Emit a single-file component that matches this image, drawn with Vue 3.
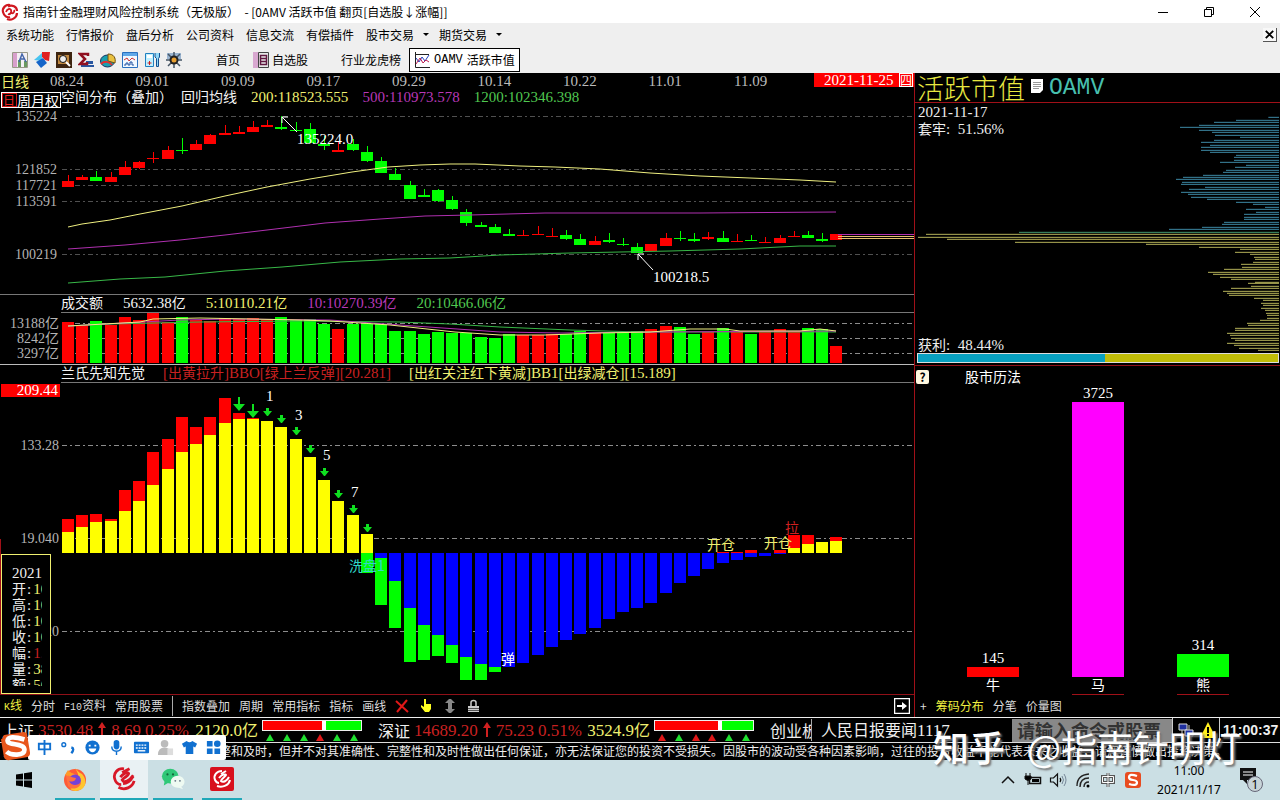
<script setup>
import { h } from 'vue'

// Splits a label into CJK and latin runs so each gets its own size.
const Mix = (props) =>
  props.s
    .split(/([\x20-\x7e]+)/)
    .filter(Boolean)
    .map((p) => h(props.tag || 'span', { class: /^[\x20-\x7e]+$/.test(p) ? 'lat' : 'cjk' }, p))
Mix.props = ['s', 'tag']

const menus = ['系统功能', '行情报价', '盘后分析', '公司资料', '信息交流', '有偿插件']
const dates = ['08.24', '09.01', '09.09', '09.17', '09.29', '10.14', '10.22', '11.01', '11.09']

const cx = (i) => Math.round(68 + 14.23 * i)
const bx = (i) => cx(i) - 6

// colour, high, low, body top, body bottom
const candles = [
  ['r', 175, 187, 181, 187], ['r', 175, 180, 177, 180], ['g', 171, 181, 177, 181], ['r', 172, 182, 177, 182],
  ['r', 161, 175, 167, 175], ['r', 161, 169, 162, 168], ['r', 152, 163, 158, 159], ['r', 146, 159, 150, 159],
  ['g', 138, 154, 150, 151], ['r', 140, 150, 144, 150], ['r', 134, 144, 135, 144], ['r', 125, 135, 133, 135],
  ['r', 126, 134, 132, 134], ['r', 121, 132, 127, 132], ['r', 120, 127, 125, 127], ['g', 116, 130, 127, 129],
  ['g', 122, 132, 130, 131], ['g', 123, 143, 129, 143], ['g', 136, 150, 144, 146], ['r', 141, 152, 150, 152],
  ['g', 139, 151, 144, 150], ['g', 146, 162, 152, 161], ['g', 157, 173, 161, 173], ['g', 168, 180, 174, 180],
  ['g', 181, 199, 185, 199], ['g', 189, 197, 195, 197], ['g', 189, 202, 190, 201], ['g', 196, 210, 200, 209],
  ['g', 209, 226, 212, 223], ['g', 222, 227, 225, 227], ['g', 224, 233, 227, 233], ['g', 229, 236, 234, 236],
  ['r', 230, 236, 235, 236], ['r', 226, 235, 234, 235], ['r', 228, 237, 236, 237], ['g', 230, 240, 235, 239],
  ['g', 234, 245, 239, 245], ['r', 236, 245, 241, 245], ['g', 233, 243, 240, 242], ['g', 238, 246, 244, 245],
  ['g', 243, 253, 247, 253], ['r', 244, 251, 244, 251], ['r', 233, 246, 238, 246], ['g', 231, 241, 238, 239],
  ['g', 233, 242, 239, 241], ['r', 232, 240, 237, 239], ['g', 231, 242, 238, 242], ['r', 234, 242, 241, 242],
  ['g', 235, 241, 240, 241], ['r', 237, 243, 242, 243], ['r', 235, 243, 238, 243], ['r', 231, 237, 236, 237],
  ['g', 231, 238, 235, 238], ['g', 233, 242, 239, 241], ['r', 234, 240, 234, 240]
]

const volumeColors = 'rrgrrrrrgrrrrrrggggr' + 'g'.repeat(12) + 'rrrggrgggrrggrgrgrrrggr'
const volumeTops = [
  322, 325, 321, 325, 317, 320, 313, 322, 317, 320, 321, 318, 319, 318, 320, 317, 320, 319, 324, 329,
  324, 324, 324, 331, 331, 334, 332, 333, 333, 337, 338, 334, 335, 335, 334, 334, 331, 333, 333, 333,
  331, 329, 326, 327, 334, 332, 328, 332, 334, 331, 329, 331, 328, 329, 346
]

const base = 553
// bar index, top, bottom, colour
const osc = []
const ups = [
  [519, 532], [515, 527], [514, 522], [519, 521], [490, 511], [481, 501], [452, 485], [439, 469], [417, 452],
  [427, 444], [417, 435], [398, 423], [413, 419], [418, 419], [421, 421], [427, 427], [439, 439], [457, 457],
  [480, 480], [501, 501], [515, 515], [534, 534]
]
ups.forEach(([r, y], i) => {
  osc.push([i, r, y, 'r'], [i, y, base, 'y'])
})
osc.push([21, base, 573, 'g'])
const downs = [
  [558, 605], [581, 628], [608, 662], [625, 660], [635, 656], [645, 663], [657, 680], [664, 680], [667, 672],
  [667], [663], [655], [647], [640], [634], [628], [619], [612], [608], [603], [593], [583], [576], [569],
  [563], [560], [557], [556], [554]
]
downs.forEach(([b, g], k) => {
  osc.push([22 + k, base, b, 'b'])
  if (g) osc.push([22 + k, b, g, 'g'])
})
osc.push([46, 552, 553, 'r'], [47, 552, 553, 'r'], [48, 550, 553, 'r'], [50, 550, 553, 'r'])
osc.push([51, 535, 548, 'r'], [51, 548, base, 'y'], [52, 535, 544, 'r'], [52, 544, base, 'y'])
osc.push([53, 542, base, 'y'], [54, 537, 541, 'r'], [54, 541, base, 'y'])

const arrows = [[14, 408], [15, 415], [16, 427], [17, 445], [18, 468], [19, 490], [20, 505], [21, 524]]
const arrowPath = (i, y) => {
  const c = cx(i)
  return `M${c - 1} ${y}h3v3h3l-4 5h-1l-4-5h3z`
}
const longArrow = (i, y) => {
  const c = cx(i)
  return `M${c - 1} ${y}h2v7h5l-6 7-6-7h5z`
}
const marks = [['1', 266, 401], ['3', 295, 420], ['5', 323, 460], ['7', 351, 497]]

// y, start x; drawn on a 1/3 px grid up to the right edge
const chipsBlue = [
  [142, 1075], [151, 978], [157, 912], [166, 867], [172, 810], [181, 867], [187, 906], [196, 915], [202, 990],
  [211, 912], [217, 873], [226, 900], [232, 873], [241, 873], [247, 900], [256, 978], [262, 972], [271, 972],
  [277, 930], [286, 1008], [292, 975], [301, 948], [307, 939], [316, 879], [322, 819], [328, 798], [337, 816],
  [343, 813], [352, 885], [358, 837], [367, 813], [373, 834], [382, 843], [388, 891], [397, 978], [403, 1029],
  [412, 1065], [418, 1008], [427, 1038], [433, 1002], [442, 1002], [448, 1002], [457, 942], [463, 936],
  [472, 876], [478, 777]
]
const chipsGold = [
  [493, 48], [502, 24], [508, 111], [517, 315], [523, 708], [532, 867], [538, 990], [547, 975], [553, 1020],
  [562, 1032], [568, 1035], [577, 1029], [583, 993], [592, 996], [598, 942], [607, 894], [613, 909], [622, 930],
  [628, 963], [637, 1035], [640, 1014], [649, 1023], [655, 963], [664, 939], [670, 951], [676, 957],
  [685, 1032], [691, 1059], [700, 1053], [706, 1059], [715, 1053], [721, 1065], [730, 1068], [736, 1071],
  [745, 1071], [751, 1050], [760, 1011], [766, 1014], [775, 975], [781, 975], [790, 951], [796, 960],
  [805, 963], [811, 975], [820, 951], [826, 972], [835, 987], [841, 1044]
]
const chipPath = (list) => list.map(([y, x]) => `M${x} ${y}H1107`).join('')

const calendar = [
  { n: '145', name: '牛', x: 967, top: 667, c: '#f00' },
  { n: '3725', name: '马', x: 1072, top: 402, c: '#f0f' },
  { n: '314', name: '熊', x: 1177, top: 654, c: '#0f0' }
]

const quote = [
  ['开', '103', 'y'], ['高', '104', 'y'], ['低', '102', 'y'], ['收', '103', 'y'],
  ['幅', '1.2', 'r'], ['量', '385', 'y'], ['额', '563', 'y']
]

const indices = [
  { name: '上证', price: '3530.48', chg: '8.69', pct: '0.25%', amt: '2120.0亿', red: 60, t: 'gggrgg' },
  { name: '深证', price: '14689.20', chg: '75.23', pct: '0.51%', amt: '3524.9亿', red: 64, t: 'rgrrgg' }
]

const notice =
  '员会指定信息披露媒体，力求真实准确完整和及时，但并不对其准确性、完整性和及时性做出任何保证，亦无法保证您的投资不受损失。因股市的波动受各种因素影响，过往的投资收益不能代表未来之收益，请您谨慎做出投资决策。'
</script>

<template>
  <div class="app">
    <header class="title">
      <svg class="logo" viewBox="0 0 18 18"><g fill="none" stroke="#d01820" stroke-width="2.2"><path d="M9 2C5 1 1 5 2 9s4 6 7 5" /><path d="M7 3.500C11 1 16 4 16 8" /><path d="M16 10c0 5-6 8-10 6" /><path d="M5 9c1-3 4-4 5-2s-1 5-3 4M10 10c2 1 4-1 3-3" stroke-width="1.800" /></g></svg>
      <h1>指南针金融理财风险控制系统（无极版）&nbsp; - [0AMV 活跃市值 翻页[自选股↓涨幅]]</h1>
      <div class="win">
        <button aria-label="最小化"><svg viewBox="0 0 12 12"><path d="M1 6.500h10" stroke="#000" /></svg></button>
        <button aria-label="还原"><svg viewBox="0 0 12 12"><path d="M1.500 3.500h7v7h-7zM3.500 3V1.500h7v7H9" fill="none" stroke="#000" /></svg></button>
        <button aria-label="关闭"><svg viewBox="0 0 12 12"><path d="M1 1l10 10M11 1L1 11" stroke="#000" /></svg></button>
      </div>
    </header>
    <nav class="menu">
      <button v-for="m in menus" :key="m">{{ m }}</button>
      <button class="drop">股市交易<i></i></button>
      <button class="drop">期货交易<i></i></button>
      <button class="mdi" aria-label="关闭子窗口"><svg viewBox="0 0 14 14"><path d="M3 3l8 8M11 3l-8 8" stroke="#000" stroke-width="2" /></svg></button>
    </nav>
    <div class="tools">
      <div class="icons">
        <button aria-label="走势"><svg viewBox="0 0 16 16"><path d="M.5.500h15v15H.5z" fill="#f4f0f4" stroke="#998" /><path d="M1 1h4v14H1z" fill="#d8a0cc" /><path d="M6 15V8h3v7zM12 15V9h3v6z" fill="#6a9a60" /><path d="M7 10l3-8 4 8M8 7h5" fill="none" stroke="#4466aa" stroke-width="1.500" /></svg></button>
        <button aria-label="标记"><svg viewBox="0 0 16 16"><path d="M0 8l8-7v8z" fill="#49c4f0" /><path d="M8 0h8l-1 9-4-1-3-3z" fill="#e02020" /><path d="M2 10l7-4 4 5-6 5z" fill="#1464c8" /></svg></button>
        <button aria-label="查找"><svg viewBox="0 0 16 16"><path d="M0 0h16v16H0z" fill="#3c2410" /><path d="M2 3h11v9H2z" fill="#c08840" /><circle cx="7" cy="7" r="3.500" fill="#eee" stroke="#111" /><path d="M10 10l4 4" stroke="#fff" stroke-width="2" /></svg></button>
        <button aria-label="统计"><svg viewBox="0 0 16 16"><path d="M8 9h7v3H8zM3 13h13v2H3z" fill="#2856a0" /><path d="M10 4V2H2l5 5-5 5h7v-2" fill="none" stroke="#901020" stroke-width="2.500" /></svg></button>
        <button aria-label="分布"><svg viewBox="0 0 16 16"><ellipse cx="7.500" cy="9" rx="7" ry="6" fill="#18a0b0" stroke="#143060" /><path d="M8 9V2c6 0 8 4 7 9z" fill="#e8c040" stroke="#705010" /><path d="M1 12c3-3 8-3 11 1" stroke="#e03030" stroke-width="2" fill="none" /></svg></button>
        <button aria-label="图表"><svg viewBox="0 0 16 16"><path d="M.5.500h15v15H.5z" fill="#f0f8ff" stroke="#2a70c0" /><path d="M1 1h14v3H1z" fill="#60a8e8" /><path d="M2 8l3-2 2 3 3-3 3 2" fill="none" stroke="#d03030" /><path d="M2 13h2v-2h2v2h2v-3h2v3h2" fill="none" stroke="#2050a0" /></svg></button>
        <button aria-label="数据"><svg viewBox="0 0 16 16"><path d="M1.500 1.500h8v13h-8z" fill="#c0f0ff" stroke="#2080c0" /><path d="M3 3h5v3H3z" fill="#fff" /><path d="M11 1v4l1.500 1.500v8h2v-8L15.500 5V1" fill="#90d8f8" stroke="#145090" /><path d="M5.500 9v4M3.500 11h4" stroke="#d02020" /></svg></button>
        <button aria-label="设置"><svg viewBox="0 0 16 16"><path d="M1 1h14v6H1z" fill="#9ab4d0" /><path d="M8 0v16M0 8h16M2 2l12 12M14 2L2 14" stroke="#456" stroke-width="1.500" /><circle cx="8" cy="8" r="4.500" fill="#222" /><circle cx="8" cy="8" r="2.500" fill="#e8a030" /></svg></button>
      </div>
      <button class="t-home">首页</button>
      <button class="t-own"><svg viewBox="0 0 16 16"><path d="M0 0h5v16H0z" fill="#d8a8d0" /><path d="M5.500.500h10v15h-10z" fill="#e8e8e8" stroke="#444" /><path d="M7.500 3.500h6v9h-6zM7.500 6.500h6M7.500 9.500h6" fill="none" stroke="#601840" stroke-width="1.500" /></svg>自选股</button>
      <button class="t-rank">行业龙虎榜</button>
      <button class="t-active"><svg viewBox="0 0 16 16"><path d="M1.500 0v15.500H16M1 2.500h14" fill="none" stroke="#222" /><path d="M2 6l3 4 3-5 3 4 4-6" fill="none" stroke="#2040c0" /><path d="M2 12l4-6 3 5 3-3 3 2" fill="none" stroke="#c02050" /></svg><span class="lm">OAMV</span>活跃市值</button>
    </div>

    <main class="main">
      <section class="left">
        <div class="dates">
          <span class="period">日线</span>
          <div class="ticks"><span v-for="d in dates" :key="d" class="lat">{{ d }}</span></div>
          <span class="today"><Mix s="2021-11-25" /><b>四</b></span>
        </div>
        <div class="legend one">
          <span class="switch"><b>日</b>周月权</span>
          <span class="w">空间分布（叠加）</span><span class="w second">回归均线</span>
          <span class="y"><Mix s="200:118523.555" /></span>
          <span class="m"><Mix s="500:110973.578" /></span>
          <span class="g"><Mix s="1200:102346.398" /></span>
        </div>
        <svg class="chart" viewBox="0 108 914 186">
          <g class="grid"><path d="M62 116.500H912M62 169.500H912M62 185.500H912M62 201.500H912M62 254.500H912" /></g>
          <g class="axis"><text x="57" y="121">135224</text><text x="57" y="174">121852</text><text x="57" y="190">117721</text><text x="57" y="206">113591</text><text x="57" y="259">100219</text></g>
          <g v-for="(c, i) in candles" :key="i" :class="'f' + c[0]">
            <rect :x="cx(i)" :y="c[1]" width="1" :height="c[2] - c[1]" />
            <rect :x="bx(i)" :y="c[3]" width="12" :height="c[4] - c[3]" />
          </g>
          <g fill="none">
            <polyline class="sy" points="68,227 82,224 110,220 140,214 182,206 225,196 267,187 310,179 352,172 388,167 420,165 450,164 475,164 520,166 555,167 600,169 650,173 700,176 750,178 800,180 836,182" />
            <polyline class="sm" points="68,249 125,245 180,240 225,235 267,230 325,223 380,219 425,216 470,215 545,213 700,213 836,212" />
            <polyline class="sg" points="68,283 120,279 165,277 225,271 282,267 340,262 400,259 450,258 500,255 570,253 620,252 670,251 740,249 800,246 836,246" />
            <path class="sm" d="M838 234.500h76" /><path d="M838 236.500h76M838 238.500h76" stroke="#e8c070" />
            <path class="sw" d="M282 117l15 15M282 123v-6h6M638 254l15 16M638 260v-6h6M282 117l5 5M638 254l4 4" />
          </g>
          <text class="num" x="297" y="144">135224.0</text><text class="num" x="653" y="282">100218.5</text>
        </svg>
        <div class="legend ruled wide">
          <span class="w">成交额</span><span class="w"><Mix s="5632.38亿" /></span><span class="y"><Mix s="5:10110.21亿" /></span><span class="m"><Mix s="10:10270.39亿" /></span><span class="g"><Mix s="20:10466.06亿" /></span>
        </div>
        <svg class="chart" viewBox="0 313 914 51">
          <g class="grid light"><path d="M62 323.500H912M62 338.500H912M62 353.500H912" /></g>
          <g class="axis"><text x="59" y="328"><Mix tag="tspan" s="13188亿" /></text><text x="59" y="343"><Mix tag="tspan" s="8242亿" /></text><text x="59" y="358"><Mix tag="tspan" s="3297亿" /></text></g>
          <rect v-for="(t, i) in volumeTops" :key="i" :class="'f' + volumeColors[i]" :x="bx(i)" :y="t" width="12" :height="363 - t" />
          <g fill="none">
            <polyline class="sg" points="68,326 110,324 200,322 300,321 400,322 450,324 500,327 570,330 640,332 836,332" />
            <polyline class="sm" points="68,326 180,320 230,319 330,320 400,325 500,332 560,333 650,332 836,331" />
            <polyline class="sy" points="68,326 140,322 153,319 200,318 300,320 330,321 390,325 455,332 500,335 545,335 600,333 650,332 690,329 725,329 740,331 800,331 820,329 836,331" />
          </g>
        </svg>
        <div class="legend ruled bright">
          <span class="w">兰氏先知先觉</span><span class="r"><Mix s="[出黄拉升]BBO[绿上兰反弹][20.281]" /></span><span class="y"><Mix s="[出红关注红下黄减]BB1[出绿减仓][15.189]" /></span>
        </div>
        <div class="lower">
          <svg class="chart" viewBox="0 383 914 311">
            <g class="grid light"><path d="M62 445.500H912M62 538.500H912M62 631.500H912" /></g>
            <rect x="1" y="384" width="59" height="13" fill="#f00" />
            <path d="M.5 539V694" stroke="#a01018" />
            <g class="axis"><text class="tw" x="58" y="395">209.44</text><text x="59" y="450">133.28</text><text x="59" y="543">19.040</text><text x="59" y="636">20</text></g>
            <rect v-for="(b, i) in osc" :key="i" :class="'f' + b[3]" :x="bx(b[0])" :y="b[1]" width="12" :height="b[2] - b[1]" />
            <g fill="#0fe020"><path :d="longArrow(12, 397)" /><path :d="longArrow(13, 404)" /><path v-for="a in arrows" :key="a[0]" :d="arrowPath(a[0], a[1])" /></g>
            <text v-for="m in marks" :key="m[0]" class="num" :x="m[1]" :y="m[2]">{{ m[0] }}</text>
            <text class="cj tc" x="349" y="571">洗盘1</text><text class="cj tw" x="501" y="664">弹</text>
            <text class="cj ty" x="707" y="550">开仓</text><text class="cj ty" x="764" y="548">开仓</text><text class="cj tr" x="785" y="533">拉</text>
          </svg>
          <aside class="quote">
            <div class="clip">
              <p><Mix s="20211117" /></p>
              <p v-for="q in quote" :key="q[0]">{{ q[0] }}<span class="lat colon">:</span><span class="lat" :class="q[2]">{{ q[1] }}</span></p>
            </div>
          </aside>
        </div>
        <nav class="tabs">
          <div><button class="y"><span class="lm">K</span>线</button><button>分时</button><button><span class="lm">F10</span>资料</button><button>常用股票</button></div>
          <div class="sep"><button>指数叠加</button><button>周期</button><button>常用指标</button><button>指标</button><button>画线</button></div>
          <div class="acts">
            <button aria-label="删除"><svg viewBox="0 0 14 14"><path d="M1 2l12 11M12 1L2 13" stroke="#e01818" stroke-width="2" /></svg></button>
            <button aria-label="拖动"><svg viewBox="0 0 14 14"><path d="M5 0h2v5h5v5l-2 3H6L2 8V6l3 2z" fill="#ff2" /></svg></button>
            <button aria-label="缩放"><svg viewBox="0 0 14 14"><path d="M7-1l5 5H9v6h3l-5 5-5-5h3V4H2z" fill="#888" /></svg></button>
            <button aria-label="锁定"><svg viewBox="0 0 14 14"><path d="M1 7h11v6H1z" fill="#ccc" /><path d="M4 7V3.500q0-2 2.500-2T9 3.500V7" stroke="#ccc" stroke-width="1.500" fill="none" /><path d="M1 9.500h11M1 11.500h11" stroke="#555" /></svg></button>
          </div>
          <button class="next" aria-label="下一页"><svg viewBox="0 0 16 16"><path d="M.5.500h15v15H.5z" fill="none" stroke="#fff" stroke-width="1.500" /><path d="M3 7h5V4l5 4-5 4V9H3z" fill="#fff" /></svg></button>
        </nav>
      </section>

      <section class="right">
        <div class="head"><h2>活跃市值</h2><svg viewBox="0 0 12 14"><path d="M0 0h12v11l-3 3H0z" fill="#fff" /><path d="M2 3.500h8M2 5.500h8M2 7.500h8M2 9.500h6" stroke="#999" /></svg><span class="lm">OAMV</span></div>
        <div class="chips">
          <svg class="chart" viewBox="15 99 1095 750">
            <g fill="none" stroke-width="3"><path :d="chipPath(chipsBlue)" stroke="#3d88a4" /><path d="M327 487H1107" stroke="#409870" /><path :d="chipPath(chipsGold)" stroke="#b4b058" /></g>
          </svg>
          <div class="pct top"><p><Mix s="2021-11-17" /></p><p>套牢<span class="lat">: &nbsp;51.56%</span></p></div>
          <div class="pct bottom"><p>获利<span class="lat">: &nbsp;48.44%</span></p></div>
        </div>
        <div class="ratio"><i></i></div>
        <div class="cal">
          <button class="help" aria-label="帮助">?</button>
          <svg class="chart" viewBox="915 366 365 329">
            <path d="M1072 694.500h52M1177 694.500h52" stroke="#a01018" />
            <text class="cj tw" x="965" y="382">股市历法</text>
            <g v-for="c in calendar" :key="c.n" text-anchor="middle">
              <rect :x="c.x" :y="c.top" width="52" :height="677 - c.top" :fill="c.c" />
              <text class="num" :x="c.x + 26" :y="c.top - 4">{{ c.n }}</text><text class="cj tw" :x="c.x + 26" y="690">{{ c.name }}</text>
            </g>
          </svg>
        </div>
        <nav class="tabs rt"><button>+</button><button class="y">筹码分布</button><button>分笔</button><button>价量图</button></nav>
      </section>
    </main>

    <section class="ticker">
      <div v-for="x in indices" :key="x.name" class="idx">
        <span>{{ x.name }}</span><span class="r"><Mix :s="x.price" /></span>
        <svg class="up" viewBox="0 0 10 16"><path d="M5 0l4 6H6v9H4V6H1z" fill="#d02020" /></svg>
        <span class="r"><Mix :s="x.chg" /></span><span class="r"><Mix :s="x.pct" /></span><span class="y amt"><Mix :s="x.amt" /></span>
        <div class="meter"><div class="rg"><i :style="{ width: x.red + '%' }"></i></div><div class="tri"><i v-for="(t, k) in x.t" :key="k" :class="t"></i></div></div>
      </div>
      <span class="cyb">创业板</span>
      <a class="news" href="#">人民日报要闻<Mix s="1117" /></a>
      <input type="text" placeholder="请输入命令或股票" aria-label="请输入命令或股票" />
      <div class="alerts">
        <svg viewBox="0 0 16 16"><path d="M1 2h8v6H1z" fill="#2030a0" stroke="#ddd" /><path d="M7 8h8v6H7z" fill="#2030a0" stroke="#ddd" /><path d="M4 8v5h3M11 3v5" fill="none" stroke="#ccc" /></svg>
        <svg viewBox="0 0 16 16"><path d="M8 0l8 16H0z" fill="#ffee20" /><path d="M8 5v6M8 12v2" stroke="#000" stroke-width="2" /></svg>
      </div>
      <time>11:00:37</time>
    </section>
    <p class="notice">{{ notice }}</p>

    <footer class="taskbar">
      <div class="apps">
        <button class="start" aria-label="开始"><svg viewBox="0 0 16 16"><path d="M0 2.500l7-1v6H0zM8 1.300L16 0v7.500H8zM0 8.500h7v6l-7-1zM8 8.500h8V16l-8-1.300z" /></svg></button>
        <button class="run" aria-label="Firefox"><svg viewBox="0 0 24 24"><circle cx="12" cy="13" r="11" fill="#ff5a36" /><path d="M12 1c3 3 3 4 7 6 4 4 5 11 0 15-4 2-8 3-12 0 8-3 12-11 5-21z" fill="#ffc52e" /><path d="M2 8l3-5c2 3 5 3 8 5L9 11z" fill="#ff9a28" /><circle cx="12" cy="13.500" r="6" fill="#7542d8" /><path d="M3 9c4-1 5 2 10 2-1 4-4 4-7 3 2 5 9 5 12 1 0 6-9 9-13 4z" fill="#ff7040" /></svg></button>
        <button class="run on" aria-label="指南针"><svg viewBox="0 0 26 26"><g fill="none" stroke="#d81828" stroke-width="3"><path d="M13 2C6 1 1 7 3 13c1 4 4 6 7 6" /><path d="M11 6l8-4M9 11c3-4 8-6 9-4s-5 4-7 7c2 4 8 1 12-5M12 18c4 0 8-3 11-8" /><path d="M7 22c7 4 15 0 17-7" /></g></svg></button>
        <button class="run" aria-label="微信"><svg viewBox="0 0 26 24"><ellipse cx="10" cy="9" rx="9" ry="8" fill="#30c878" /><path d="M4 14l-1 5 5-3z" fill="#30c878" /><ellipse cx="18" cy="15" rx="7.500" ry="6.500" fill="#eefaf2" /><path d="M21 19l3 4-6-2z" fill="#eefaf2" /><circle cx="7" cy="7" r="1.200" fill="#14683c" /><circle cx="13" cy="7" r="1.200" fill="#14683c" /><circle cx="15.500" cy="14" r="1" fill="#678" /><circle cx="20.500" cy="14" r="1" fill="#678" /></svg></button>
        <button class="run" aria-label="指南针终端"><svg viewBox="0 0 24 24"><rect width="24" height="24" rx="2" fill="#d8101c" /><g fill="none" stroke="#fff" stroke-width="2"><path d="M12 4C7 4 3 8 5 13c1 2 3 3 4 3M11 7l5-3M9 11c3-4 7-4 7-3s-4 3-5 6c2 2 6 0 8-4M7 19c6 2 12-1 13-6" /></g></svg></button>
      </div>
      <div class="tray">
        <svg viewBox="0 0 18 18"><path d="M3 12l6-6 6 6" fill="none" stroke="#111" stroke-width="1.500" /></svg>
        <svg viewBox="0 0 18 18"><path d="M5.500 6.500h11v6h-11z" fill="none" stroke="#111" stroke-width="1.500" /><path d="M8 8h7v3H8z" /><path d="M1 5h6v3q-3 3-6 0zM2 2v3M6 2v3M4 9v5" stroke="#111" /></svg>
        <svg viewBox="0 0 18 18"><path d="M1.500 7h3l4-4v12l-4-4h-3z" fill="none" stroke="#111" stroke-width="1.200" /><path d="M11 7q1.500 2 0 4" fill="none" stroke="#111" stroke-width="1.300" /><path d="M13 5q3 4 0 8M15 3q4 6 0 12" fill="none" stroke="#789" /></svg>
        <svg viewBox="0 0 18 18"><circle cx="14" cy="15" r="1.500" /><path d="M10 16q0-5 5-5M6 16q0-9 9-9M3 15Q3 4 15 3" fill="none" stroke="#222" stroke-width="1.400" /></svg>
        <svg viewBox="0 0 18 18"><path d="M3.500 5.500h11v6h-11zM9 2v14" fill="none" stroke="#555" stroke-width="3" /><path d="M3.500 5.500h11v6h-11zM9 2v14" fill="none" stroke="#fff" stroke-width="1" /></svg>
        <svg viewBox="0 0 18 18"><rect x="1" y="1" width="16" height="16" rx="3" fill="#e84c20" /><path d="M13 5Q5 2 5 6.500q0 2 4 2.500t4 2.500q0 4-8 1.500" fill="none" stroke="#fff" stroke-width="2.200" /></svg>
        <div class="clock"><span>11:00</span><span>2021/11/17</span></div>
        <button class="note" aria-label="通知"><svg viewBox="0 0 26 26"><path d="M1 1h16v12H8v4l-4-4H1z" fill="#111" /><path d="M4 5h10M4 8h10" stroke="#fff" stroke-width="1.200" /><circle cx="16" cy="17" r="7.500" fill="#c8d4d8" stroke="#667" /><text x="16" y="22" text-anchor="middle" font-size="13" font-family="Open Sans, sans-serif">1</text></svg></button>
      </div>
    </footer>

    <div class="ime">
      <svg class="sogou" viewBox="0 0 32 32"><path d="M2 6Q2 3 5 3l19-3q4 0 4 4l3 18q0 4-4 5L8 30q-4 0-5-4L0 8z" fill="#e8561c" /><path d="M25 8Q8 3 7 9c0 6 18 2 18 10 0 7-15 6-19 2" fill="none" stroke="#fff" stroke-width="5" /></svg>
      <div class="keys">
        <svg viewBox="0 0 18 18"><path d="M3 5h12v6H3zM9 1v16" fill="none" stroke="#1070d0" stroke-width="2" /></svg>
        <svg viewBox="0 0 18 18"><circle cx="4" cy="6" r="2" fill="none" stroke="#1070d0" stroke-width="1.500" /><path d="M12 9q4 1 0 6" fill="none" stroke="#1070d0" stroke-width="2.500" /></svg>
        <svg viewBox="0 0 18 18"><circle cx="9" cy="9" r="7.500" fill="#1070d0" /><path d="M5 10h8q-1 4-4 4t-4-4zM5 6h2v2H5zM11 6h2v2h-2z" fill="#fff" /></svg>
        <svg viewBox="0 0 18 18"><rect x="6" y="1" width="6" height="10" rx="3" fill="#1070d0" /><path d="M4 8q0 5 5 5t5-5M9 13v4" fill="none" stroke="#1070d0" stroke-width="1.500" /></svg>
        <svg viewBox="0 0 18 18"><rect x="1" y="3" width="16" height="12" rx="1" fill="#1070d0" /><path d="M3 6.500h12M3 9.500h12" stroke="#fff" stroke-width="1.500" stroke-dasharray="2 1" /><path d="M5 12.500h8" stroke="#fff" stroke-width="1.500" /></svg>
        <svg viewBox="0 0 18 18"><circle cx="8" cy="5" r="4" fill="#bbb" /><path d="M1 17q0-8 7-8t7 8z" fill="#bbb" /><path d="M11 10h6v7h-6z" fill="#ddd" /></svg>
        <svg viewBox="0 0 18 18"><path d="M6 2q3 3 6 0l5 3-2 4-2-1v8H5V8L3 9 1 5z" fill="#1070d0" /></svg>
        <svg viewBox="0 0 18 18"><path d="M2 2h6v6H2zM2 10h6v6H2zM10 10h6v6h-6z" fill="#1070d0" /><circle cx="13" cy="5" r="3.500" fill="#1070d0" /></svg>
      </div>
    </div>
    <div class="mark"><b>知乎</b><span>@指南针明灯</span></div>
  </div>
</template>

<style>
body { margin: 0; background: #cbdfe4; }
.lat { font-family: "Liberation Serif", serif; font-size: 15px; }
.ticker .lat { font-size: 17px; }
.axis .lat { font-size: 14px; }
.clip .lat { line-height: 0; }
</style>

<style scoped>
.app { position: relative; overflow: hidden; font: 12px/16px "Noto Sans CJK SC", sans-serif; color: #000; }
.app * { box-sizing: border-box; }
button { border: 0; background: none; padding: 0; margin: 0; font: inherit; color: inherit; white-space: nowrap; }
p, h1, h2 { margin: 0; font-weight: 400; }
svg { display: block; flex: none; }
.lm { font-family: "Liberation Mono", monospace; }

.title { display: flex; align-items: center; height: 23px; background: #fff; }
.logo { width: 18px; height: 18px; margin: 0 4px 0 1px; }
.title h1 { font-size: 12px; flex: 1; }
.win { display: flex; gap: 34px; padding-right: 19px; }
.win svg { width: 12px; height: 12px; }
.menu { display: flex; align-items: center; gap: 12px; height: 23px; padding: 0 3px 0 6px; background: #efefef; }
.drop { display: flex; align-items: center; gap: 9px; margin-right: -2px; }
.drop i { border: 3px solid transparent; border-top-color: #000; border-bottom: 0; }
.mdi { margin-left: auto; width: 14px; height: 14px; background: #f8f8f8; border-right: 1px solid #555; border-bottom: 1px solid #555; }
.tools { display: flex; align-items: center; height: 27px; padding-left: 12px; background: #efefef; }
.icons { display: flex; gap: 6px; width: 204px; }
.icons svg, .tools svg { width: 16px; height: 16px; }
.t-home { width: 37px; text-align: left; }
.t-own { display: flex; gap: 3px; width: 88px; }
.t-rank { width: 68px; text-align: left; }
.t-active { display: flex; align-items: center; gap: 4px; height: 24px; padding: 0 4px; background: #fff; border: 1px solid #000; }

.main { display: grid; grid-template-columns: 915fr 365fr; background: #000; border-bottom: 1px solid #eee; }
.left { border-right: 1px solid #a01018; min-width: 0; }
.chart { width: 100%; height: auto; }
.w { color: #f4f4f4; } .y { color: #f0f070; } .m { color: #b838b8; } .g { color: #50c850; } .r { color: #c82020; }
.dates { display: grid; grid-template-columns: 50px 1fr 100px; height: 16px; line-height: 16px; }
.period { color: #f0f070; font-size: 14px; padding-left: 1px; }
.ticks { display: grid; grid-template-columns: repeat(8, 1fr) 80px; color: #bbb; }
.today { display: flex; justify-content: space-between; height: 14px; line-height: 14px; padding: 0 1px 0 10px; background: #f00; color: #fff; }
.today b { font-size: 12px; line-height: 12px; font-weight: 400; border: 1px solid #fff; }
.legend { display: flex; gap: 18px; height: 18px; line-height: 14px; font-size: 14px; padding-left: 61px; white-space: nowrap; }
.legend.one { height: 19px; gap: 14px; padding-left: 1px; }
.legend.one .second { margin-left: -6px; }
.legend.wide { gap: 20px; }
.switch { align-self: flex-end; display: flex; height: 16px; margin-right: -14px; line-height: 14px; border: 1px solid #fff; color: #fff; width: 60px; }
.switch b { color: #f02020; font-weight: 400; border: 1px solid #d01818; line-height: 12px; width: 15px; font-size: 12px; }
.ruled { height: 19px; line-height: 15px; border-top: 1px solid #777; background: linear-gradient(#777, #777) 61px 100% / 100% 1px no-repeat; }
.ruled.bright { border-top-color: #bbb; }
.grid path { fill: none; stroke: #505050; stroke-dasharray: 5 3 2 3; }
.grid.light path { stroke: #8c8c8c; }
.axis text { font: 14px "Liberation Serif", serif; fill: #b4b4b4; text-anchor: end; }
.axis .tw { fill: #fff; font-size: 15px; }
.axis :deep(.cjk) { font-family: "Noto Sans CJK SC", sans-serif; }
.num { font: 15px "Liberation Serif", serif; fill: #fff; }
.cj { font: 14px "Noto Sans CJK SC", sans-serif; }
.tw { fill: #fff; } .ty { fill: #f0f070; } .tr { fill: #d02020; } .tc { fill: #30d8c8; }
.fr { fill: #f00; } .fg { fill: #0f0; } .fy { fill: #ff0; } .fb { fill: #00f; }
.sy { stroke: #f0f080; } .sm { stroke: #b030b0; } .sg { stroke: #38b848; } .sw { stroke: #fff; }
.lower { position: relative; border-bottom: 1px solid #901018; }
.quote { position: absolute; left: 1px; bottom: 0; width: 50px; height: 140px; background: #000; border: 1px solid #f0f070; padding: 9px 8px 8px 10px; color: #eee; }
.clip { overflow: hidden; height: 122px; white-space: nowrap; font-size: 14px; line-height: 16px; }
.colon { padding: 0 2px 0 1px; }
.tabs { display: flex; align-items: center; height: 22px; color: #ddd; padding: 0 4px; }
.tabs div { display: flex; gap: 9px; padding-right: 9px; }
.tabs .sep { border-left: 1px solid #aaa; padding: 2px 9px; }
.tabs .y { color: #f0f040; }
.tabs .lm { font-size: 10px; }
.acts svg { width: 14px; height: 14px; }
.tabs .acts { gap: 10px; padding: 0; }
.next { margin-left: auto; }
.next svg { width: 16px; height: 16px; }

.right { min-width: 0; display: flex; flex-direction: column; }
.head { display: flex; align-items: center; gap: 6px; height: 30px; padding-left: 2px; border-bottom: 1px solid #a01018; }
.head h2 { color: #e8e840; font-size: 27px; line-height: 28px; font-weight: 300; }
.head svg { width: 12px; height: 14px; margin-bottom: 4px; }
.head .lm { color: #48c0b0; font-size: 23px; line-height: 28px; }
.chips { position: relative; color: #eee; font-size: 14px; }
.pct { position: absolute; left: 3px; }
.pct.top { top: 0; } .pct.bottom { bottom: 0; }
.ratio { height: 10px; margin: 0 1px 2px 2px; border: 1px solid #ddd; background: #c0bc08; }
.ratio i { display: block; height: 100%; width: 52%; background: #08a0c0; }
.cal { position: relative; border-top: 1px solid #901018; }
.help { position: absolute; left: 1px; top: 4px; width: 13px; height: 14px; border-radius: 2px; background: #fff8e0; color: #000; font-weight: 700; line-height: 14px; }
.rt { gap: 9px; padding-left: 5px; }

.ticker { display: flex; align-items: center; height: 25px; padding-left: 2px; background: #000; color: #eee; font-size: 16px; line-height: 22px; border-bottom: 1px solid #ddd; white-space: nowrap; }
.idx { display: flex; align-items: center; flex: none; width: 376px; gap: 4px; }
.idx + .idx { width: 392px; }
.idx .amt { flex: 1; text-align: right; }
.up { width: 10px; height: 16px; }
.meter { flex: none; width: 100px; margin-right: 16px; }
.rg { height: 11px; border: 1px solid #eee; background: #0f0; }
.rg i { display: block; height: 100%; background: #f00; border-right: 4px solid #fff; box-sizing: content-box; }
.tri { display: flex; justify-content: space-around; padding-top: 3px; }
.tri i { border: 4px solid transparent; border-top: 0; border-bottom: 7px solid #20e030; }
.tri i.r { border-bottom-color: #e01818; }
.cyb { width: 42px; overflow: hidden; border-right: 1px solid #aaa; }
.news { color: inherit; text-decoration: none; padding-left: 9px; }
.ticker input { margin-left: auto; width: 160px; height: 23px; border: 0; background: #888; padding: 0 5px; font: 700 18px "Noto Sans CJK SC", sans-serif; }
.ticker input::placeholder { color: #333; opacity: 1; }
.alerts { display: flex; align-items: center; gap: 6px; width: 48px; height: 24px; padding-left: 5px; border-left: 1px solid #ccc; border-right: 1px solid #ccc; }
.alerts svg { width: 16px; height: 16px; }
.ticker time { width: 60px; padding-left: 3px; font: 700 14px/22px "Liberation Sans", sans-serif; }
.notice { height: 17px; line-height: 16px; background: #000; color: #eee; padding-left: 3px; white-space: nowrap; overflow: hidden; }

.taskbar { display: flex; justify-content: space-between; height: 40px; background: #cbdfe4; }
.apps { display: flex; }
.apps button { display: flex; align-items: center; justify-content: center; width: 40px; margin-right: 9px; }
.apps .start { width: 48px; margin-right: 7px; }
.apps .run { border-bottom: 2px solid #20a8b8; }
.apps .on { width: 48px; margin: 0 5px 0 -4px; background: #e9f1f4; }
.apps svg { width: 24px; height: 24px; }
.apps .start svg { width: 16px; height: 16px; }
.tray { display: flex; align-items: center; gap: 7px; font-family: "Noto Sans", sans-serif; }
.tray svg { width: 18px; height: 18px; }
.clock { display: flex; flex-direction: column; align-items: center; line-height: 19px; width: 72px; margin-left: 4px; }
.tray .note svg { width: 26px; height: 26px; }
.note { margin: 0 15px 0 7px; }

.ime { position: absolute; left: 0; bottom: 39px; display: flex; align-items: center; height: 28px; width: 226px; }
.sogou { width: 32px; height: 30px; position: relative; }
.keys { display: flex; align-items: center; justify-content: space-between; height: 25px; flex: 1; margin: 0 0 -1px -4px; padding: 0 4px 0 8px; background: #fff; border-radius: 2px; }
.keys svg { width: 17px; height: 17px; }
.mark { position: absolute; right: 39px; bottom: 30px; display: flex; gap: 22px; font: 36px/48px "Noto Sans CJK SC", sans-serif; color: #fff; text-shadow: 2px 2px 2px #777; white-space: nowrap; pointer-events: none; }
.mark b { font-weight: 500; }
</style>
